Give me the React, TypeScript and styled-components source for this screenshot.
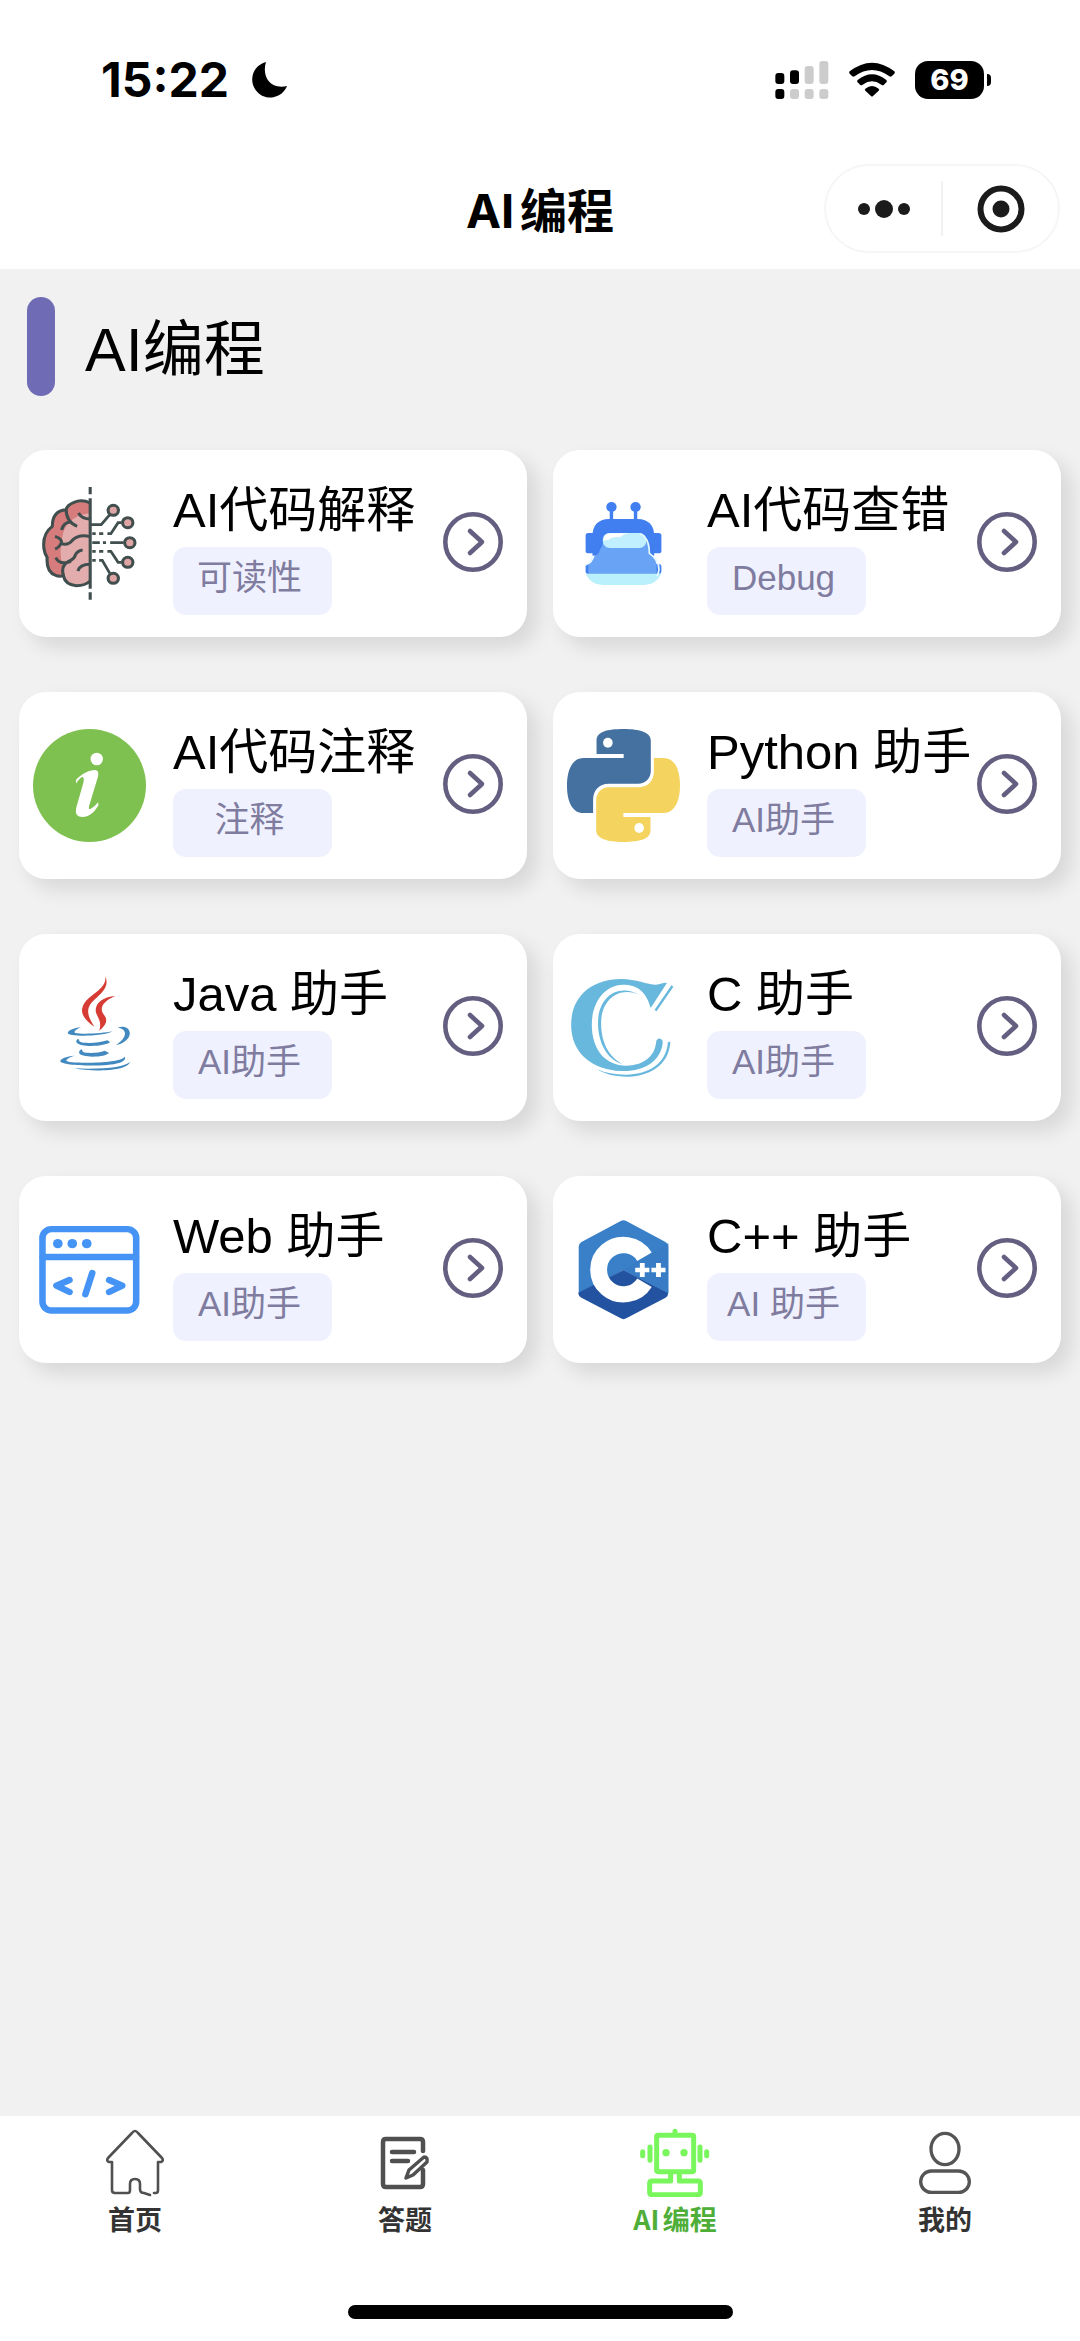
import React from 'react';
import styled, { createGlobalStyle } from 'styled-components';

const GlobalStyle = createGlobalStyle`
  * { box-sizing: border-box; }
  body {
    margin: 0;
    background: #f1f1f1;
    font-family: 'Liberation Sans', 'Noto Sans CJK SC', sans-serif;
    color: #000;
  }
`;

const Page = styled.div`
  display: flex;
  flex-direction: column;
  min-height: 100vh;
`;

const Header = styled.header`
  background: #fff;
  padding-bottom: 12px;
`;

const StatusBar = styled.div`
  display: flex;
  align-items: center;
  justify-content: space-between;
  height: 160px;
  padding: 0 89px 0 101px;
`;

const StatusGroup = styled.div<{ $gap: number }>`
  display: flex;
  align-items: center;
  gap: ${(p) => p.$gap}px;
`;

const Clock = styled.time`
  font: 700 48px/56px Inter, sans-serif;
`;

const Battery = styled.div`
  display: flex;
  align-items: center;
  gap: 3px;
`;

const BatteryLevel = styled.span`
  width: 69px;
  border-radius: 13px;
  background: #000;
  color: #fff;
  font: 800 29px/38px Inter, sans-serif;
  text-align: center;
`;

const BatteryTip = styled.span`
  width: 4px;
  height: 12px;
  border-radius: 0 6px 6px 0;
  background: #000;
`;

const NavBar = styled.div`
  display: grid;
  grid-template-columns: 1fr auto 1fr;
  align-items: center;
  height: 97px;
  padding: 0 20px;
`;

const NavTitle = styled.div`
  grid-column: 2;
  padding-top: 4px;
  font: 700 47px/60px Inter, 'Noto Sans CJK SC', sans-serif;
  text-autospace: normal;
`;

const Capsule = styled.div`
  justify-self: end;
  display: flex;
  align-items: center;
  width: 236px;
  height: 89px;
  border: 2px solid #f6f6f6;
  border-radius: 45px;
`;

const CapsuleButton = styled.button`
  flex: 1;
  display: flex;
  align-items: center;
  justify-content: center;
  height: 55px;
  padding: 0;
  border: 0;
  background: none;

  & + & {
    border-left: 2px solid #f1f1f1;
  }
`;

const Main = styled.main`
  flex: 1;
  padding: 28px 19px;
`;

const Heading = styled.div`
  display: flex;
  align-items: center;
  gap: 30px;
  margin: 0 8px 54px;
`;

const HeadingMark = styled.span`
  width: 28px;
  height: 99px;
  border-radius: 14px;
  background: #6f6cb5;
`;

const HeadingText = styled.h1`
  margin: 0;
  padding-top: 6px;
  font-size: 61px;
  font-weight: 400;
  line-height: 90px;
`;

const CardGrid = styled.div`
  display: grid;
  grid-template-columns: 1fr 1fr;
  gap: 55px 26px;
`;

const Card = styled.a`
  display: flex;
  align-items: center;
  min-width: 0;
  height: 187px;
  padding: 0 24px 0 14px;
  border-radius: 27px;
  background: #fff;
  box-shadow: 10px 10px 20px rgba(0, 0, 0, 0.11);
  color: #000;
  text-decoration: none;
`;

const CardBody = styled.div`
  flex: 1;
  min-width: 0;
  margin-left: 27px;
`;

const CardTitle = styled.div`
  font-size: 49px;
  line-height: 74px;
  white-space: nowrap;
`;

const Tag = styled.div`
  width: 159px;
  height: 68px;
  padding-right: 6px;
  border-radius: 13px;
  background: #f0f1fe;
  color: #7f7c9f;
  font-size: 35px;
  line-height: 62px;
  text-align: center;
`;

const Arrow = styled.svg`
  flex: none;
  margin-bottom: 4px;
`;

const TabBar = styled.nav`
  display: grid;
  grid-template-columns: repeat(4, 1fr);
  background: #fff;
  padding-top: 11px;
`;

const Tab = styled.a<{ $active?: boolean }>`
  display: flex;
  flex-direction: column;
  align-items: center;
  gap: 3px;
  color: ${(p) => (p.$active ? '#4fae38' : '#333')};
  font: 700 27px/38px 'Noto Sans CJK SC', sans-serif;
  text-autospace: normal;
  text-decoration: none;
`;

const HomeIndicator = styled.div`
  background: #fff;
  padding: 67px 0 22px;

  &::after {
    content: '';
    display: block;
    width: 385px;
    height: 14px;
    margin: 0 auto;
    border-radius: 7px;
    background: #000;
  }
`;

const Moon = () => (
  <svg width="38" height="38" viewBox="0 0 38 38">
    <path d="M15 1C11 13 17 29 36 25A18 18 0 1 1 15 1Z" />
  </svg>
);

const Signal = () => (
  <svg width="54" height="38" viewBox="75 63 160 114">
    <rect x="75" y="99" width="27" height="33" rx="9" />
    <rect x="119" y="91" width="27" height="41" rx="9" />
    <rect x="75" y="147" width="27" height="30" rx="9" />
    <g fill="#ccc">
      <rect x="163" y="78" width="27" height="54" rx="9" />
      <rect x="207" y="63" width="27" height="69" rx="9" />
      <rect x="119" y="147" width="27" height="30" rx="9" />
      <rect x="163" y="147" width="27" height="30" rx="9" />
      <rect x="207" y="147" width="27" height="30" rx="9" />
    </g>
  </svg>
);

const Wifi = () => (
  <svg width="46" height="36" viewBox="296 67 138 108">
    <path d="M298 95Q365 43 432 95Q435 99 432 102L424 110Q421 112 417 110Q365 72 313 110Q309 112 306 110L298 102Q295 99 298 95Z" />
    <path d="M322 121Q365 87 408 121Q412 125 408 128L401 135Q397 138 393 135Q365 115 337 135Q333 138 329 135L322 128Q318 125 322 121Z" />
    <path d="M345 147Q365 131 385 147Q388 150 385 153L368 169Q365 172 362 169L345 153Q342 150 345 147Z" />
  </svg>
);

const MoreDots = () => (
  <svg width="52" height="20" viewBox="0 0 52 20" fill="#1b1b1b">
    <circle cx="6" cy="10" r="6" />
    <circle cx="26" cy="10" r="9" />
    <circle cx="46" cy="10" r="6" />
  </svg>
);

const Target = () => (
  <svg width="48" height="48" viewBox="0 0 48 48">
    <circle cx="24" cy="24" r="20.5" fill="none" stroke="#1b1b1b" strokeWidth="6" />
    <circle cx="24" cy="24" r="8.5" fill="#1b1b1b" />
  </svg>
);

const ChevronCircle = () => (
  <Arrow width="60" height="60" viewBox="0 0 60 60" fill="none" stroke="#645f80" strokeWidth="4.6" strokeLinecap="round" strokeLinejoin="round">
    <circle cx="30" cy="30" r="27.7" />
    <path d="M27 19L39 30L27 41" />
  </Arrow>
);

const CardIcon = styled.svg.attrs({ width: 113, height: 113, preserveAspectRatio: 'none' })`
  flex: none;
`;

const BrainIcon = () => (
  <CardIcon viewBox="96 144 328 339">
    <path d="M262 192Q238 178 215 190Q195 198 192 212Q152 215 152 262Q122 285 128 330Q130 345 137 355Q134 400 162 409Q172 414 184 410Q190 438 222 440Q248 440 262 426Z" fill="#d77c7c" />
    <path d="M262 222C225 228 190 245 182 290C172 330 176 365 186 400Q190 438 222 440Q248 440 262 426Z" fill="#e3adad" />
    <g fill="none" stroke="#414e4e" strokeWidth="9">
      <path d="M262 192Q238 180 215 190Q195 198 192 212Q152 215 152 262Q122 285 128 330Q130 345 137 355Q134 400 162 409Q172 414 184 410Q190 438 222 440Q248 440 262 426" />
      <path d="M228 222Q238 240 262 240M192 210Q192 248 224 262M179 273Q184 250 206 248M160 292Q182 300 178 312Q172 326 160 330M178 314Q198 320 210 304Q230 284 262 293M162 356Q174 380 206 367M184 410Q176 380 198 368Q216 360 218 350Q224 335 240 333M226 396Q232 376 262 376" />
      <path d="M262 144V166M262 178V449M262 460V482" />
      <path d="M262 257H294L319 227M268 284H278M288 284H300M312 284H322L343 251H353M268 311H290M299 311H308M320 311H359M268 337H278M288 337H300M312 337H322L343 370H353M268 364H278M288 364H297L319 403" strokeWidth="8" />
      <g fill="#dfa5a5" strokeWidth="9">
        <circle cx="329" cy="214" r="15" />
        <circle cx="371" cy="251" r="15" />
        <circle cx="377" cy="311" r="15" />
        <circle cx="371" cy="370" r="15" />
        <circle cx="329" cy="418" r="15" />
      </g>
    </g>
  </CardIcon>
);

const RobotIcon = () => (
  <CardIcon viewBox="78 144 328 339">
    <g fill="#417ff0">
      <circle cx="207" cy="204" r="15" />
      <circle cx="277" cy="204" r="15" />
      <path d="M202 210H212V245H202ZM272 210H282V245H272Z" />
      <path d="M152 350V290C152 260 168 240 200 240H283C315 240 331 260 331 290V350Z" />
      <rect x="132" y="282" width="28" height="61" rx="8" />
      <rect x="323" y="282" width="29" height="61" rx="8" />
      <rect x="132" y="375" width="220" height="30" rx="8" />
    </g>
    <path d="M140 405V376Q150 374 158 352Q172 346 174 330Q182 322 184 304H312Q318 325 318 343Q332 350 338 376V405Z" fill="#68a3f6" />
    <path d="M182 327V300Q182 282 204 282H285Q312 285 312 327Z" fill="#68a3f6" />
    <rect x="182" y="282" width="126" height="45" rx="20" fill="#c0f0ff" />
    <path d="M184 306Q182 284 204 283H262Q242 284 232 295Q210 292 198 303Q188 302 184 306Z" fill="#fff" />
    <path d="M132 404H352Q335 438 302 438H182Q148 438 132 404Z" fill="#b9f0fb" />
    <path d="M290 284Q317 295 317 343Q345 362 345 392Q344 404 338 412M132 378Q150 370 153 350" fill="none" stroke="#e4f8ff" strokeWidth="5" />
  </CardIcon>
);

const InfoIcon = () => (
  <CardIcon viewBox="96 150 328 339">
    <ellipse cx="260" cy="319.500" rx="164" ry="169.500" fill="#7ec150" />
    <g fill="#fff">
      <ellipse cx="281" cy="240" rx="18" ry="19" />
      <path d="M221 302C238 284 258 274 276 273Q288 273 285 292L259 380Q256 394 264 389Q276 382 285 370L286 379C272 403 258 414 240 414Q216 414 221 388L242 312Q246 293 239 294Q231 297 221 314Z" />
    </g>
  </CardIcon>
);

const pythonHalf =
  'M243 150C195 150 164 158 164 185V225H243V237H125C95 237 78 270 78 320C78 370 95 402 125 402H154V363C154 335 170 314 200 314H285C307 314 322 297 322 275V185C322 160 290 150 243 150Z';

const PythonIcon = () => (
  <CardIcon viewBox="78 150 329 339">
    <path d={pythonHalf} fill="#4571a1" />
    <path d={pythonHalf} fill="#f4d35e" transform="rotate(180 242.500 319.500)" />
    <ellipse cx="197" cy="191" rx="14" ry="15" fill="#fff" />
    <ellipse cx="288" cy="447" rx="14" ry="15" fill="#fff" />
  </CardIcon>
);

const JavaIcon = () => (
  <CardIcon viewBox="96 154 328 339">
    <g fill="#d73c34">
      <path d="M306 170C320 205 290 224 267 248C248 270 256 292 274 321C244 300 226 276 248 246C272 218 310 205 306 170Z" />
      <path d="M335 229C298 232 277 250 278 274C280 292 298 302 288 333C310 316 314 300 302 285C288 268 296 246 335 229Z" />
    </g>
    <g fill="#4189be">
      <path d="M236 323C214 325 196 332 197 341C200 352 302 351 327 335C300 341 242 345 218 340C213 335 224 327 236 323Z" />
      <path d="M342 324C360 317 377 325 377 342C376 358 356 373 337 376C352 366 363 355 363 341C362 329 352 325 342 324Z" />
      <path d="M226 358C215 368 224 378 265 379C292 379 310 374 320 368L312 362C290 370 248 372 234 367C227 364 233 360 226 358Z" />
      <path d="M236 389C222 400 230 410 268 411C295 411 308 407 317 400L304 393C288 400 254 402 242 397C237 395 241 391 236 389Z" />
      <path d="M217 408C192 410 175 417 175 425C180 440 310 442 345 430C360 425 368 416 361 411C358 424 290 430 240 429C205 429 190 426 193 421C197 415 207 411 217 408Z" />
      <path d="M216 446C270 458 372 454 377 427C362 442 300 450 216 446Z" />
    </g>
  </CardIcon>
);

const CIcon = () => (
  <CardIcon viewBox="78 154 328 339">
    <path d="M368 190L321 265C308 215 282 195 240 195C185 197 150 250 150 315C150 390 190 438 250 438C300 438 334 410 337 365C339 353 355 353 356 367C352 425 300 457 235 454C150 450 90 400 90 315C90 230 150 178 235 178C285 178 320 200 345 194Q360 188 368 190Z" fill="#68b8de" />
    <path d="M293 227C222 186 168 235 168 310C168 378 202 424 239 433C204 414 177 375 177 310C177 243 226 196 293 227Z" fill="#68b8de" />
    <path d="M371 367L378 366C374 440 312 471 250 471C215 471 186 463 166 449C190 460 215 465 250 465C310 464 366 436 371 367Z" fill="#68b8de" />
    <path d="M384 199L335 273" stroke="#68b8de" strokeWidth="7" />
  </CardIcon>
);

const WebIcon = () => (
  <CardIcon viewBox="96 159 328 339">
    <g fill="none" stroke="#4594f5" strokeWidth="19" strokeLinecap="round" strokeLinejoin="round">
      <rect x="123.500" y="207.500" width="272" height="244" rx="26" />
      <path d="M124 291H395M202 360L164 377L202 396M268 339L248 403M317 360L355 377L317 396" />
    </g>
    <g fill="#4594f5">
      <circle cx="168" cy="251" r="14" />
      <circle cx="210" cy="251" r="14" />
      <circle cx="252" cy="251" r="14" />
    </g>
  </CardIcon>
);

const CppIcon = () => (
  <CardIcon viewBox="78 159 328 339">
    <path d="M234 183Q242 178 250 183L364 246Q372 251 372 260V398L242 330L112 402V260Q112 251 120 246Z" fill="#3a80c8" />
    <path d="M111 398L242 330L372 398Q372 408 364 413L250 475Q242 480 234 475L120 413Q111 408 111 398Z" fill="#2252a0" />
    <path d="M242 330L372 250V400Z" fill="#377cc4" />
    <path d="M303 290A72 74 0 1 0 303 368" fill="none" stroke="#fff" strokeWidth="49" />
    <path d="M276 330H317M296.500 309V351M323 330H364M343.500 309V351" stroke="#fff" strokeWidth="14" />
  </CardIcon>
);

const HomeIcon = () => (
  <svg width="70" height="70" viewBox="0 0 70 70" fill="none" stroke="#505050" strokeWidth="2.600" strokeLinejoin="round" strokeLinecap="round">
    <path d="M54 66H56Q58 66 58 63V35H61Q64 34 62 31L38 6Q35 2 32 6L8 31Q6 34 9 35H12V63Q12 66 15 66H28Q30 66 30 63V57Q30 52 35 52Q40 52 40 57V62Q40 66 44 66L50 68" />
  </svg>
);

const QuizIcon = () => (
  <svg width="70" height="70" viewBox="0 0 70 70" fill="none" stroke="#505050" strokeWidth="4.500" strokeLinejoin="round" strokeLinecap="round">
    <path d="M53 24V15Q53 12 50 12H16Q13 12 13 15V57Q13 60 16 60H50Q53 60 53 57V43" />
    <path d="M22 25H44M22 34H38" />
    <path d="M54 30Q58 30 57 35L43 48L36 51L39 43Z" strokeWidth="3.500" />
  </svg>
);

const TabRobotIcon = () => (
  <svg width="70" height="70" viewBox="60 51 210 210" fill="none" stroke="#79f65c" strokeWidth="15" strokeLinecap="round" strokeLinejoin="round">
    <rect x="110" y="76" width="111" height="109" rx="4" />
    <path d="M165 64V74M90 111V151M240 111V151M68 125V137M260 125V137M152 190V213H96Q89 213 89 220V247Q89 254 96 254H234Q241 254 241 247V220Q241 213 234 213H178V190" />
    <circle cx="138" cy="128" r="11" fill="#79f65c" stroke="none" />
    <circle cx="192" cy="128" r="11" fill="#79f65c" stroke="none" />
  </svg>
);

const UserIcon = () => (
  <svg width="70" height="70" viewBox="870 51 210 210" fill="none" stroke="#555" strokeWidth="10">
    <ellipse cx="975" cy="117" rx="42" ry="47" />
    <rect x="902" y="183" width="146" height="64" rx="32" />
  </svg>
);

const tools = [
  { title: 'AI代码解释', tag: '可读性', Icon: BrainIcon },
  { title: 'AI代码查错', tag: 'Debug', Icon: RobotIcon },
  { title: 'AI代码注释', tag: '注释', Icon: InfoIcon },
  { title: 'Python 助手', tag: 'AI助手', Icon: PythonIcon },
  { title: 'Java 助手', tag: 'AI助手', Icon: JavaIcon },
  { title: 'C 助手', tag: 'AI助手', Icon: CIcon },
  { title: 'Web 助手', tag: 'AI助手', Icon: WebIcon },
  { title: 'C++ 助手', tag: 'AI 助手', Icon: CppIcon },
];

const tabs = [
  { label: '首页', Icon: HomeIcon },
  { label: '答题', Icon: QuizIcon },
  { label: 'AI编程', Icon: TabRobotIcon, active: true },
  { label: '我的', Icon: UserIcon },
];

export default function App() {
  return (
    <Page>
      <GlobalStyle />
      <Header>
        <StatusBar>
          <StatusGroup $gap={22}>
            <Clock>15:22</Clock>
            <Moon />
          </StatusGroup>
          <StatusGroup $gap={20}>
            <Signal />
            <Wifi />
            <Battery>
              <BatteryLevel>69</BatteryLevel>
              <BatteryTip />
            </Battery>
          </StatusGroup>
        </StatusBar>
        <NavBar>
          <NavTitle>AI编程</NavTitle>
          <Capsule>
            <CapsuleButton type="button" aria-label="更多">
              <MoreDots />
            </CapsuleButton>
            <CapsuleButton type="button" aria-label="关闭">
              <Target />
            </CapsuleButton>
          </Capsule>
        </NavBar>
      </Header>
      <Main>
        <Heading>
          <HeadingMark />
          <HeadingText>AI编程</HeadingText>
        </Heading>
        <CardGrid>
          {tools.map(({ title, tag, Icon }) => (
            <Card href="#" key={title}>
              <Icon />
              <CardBody>
                <CardTitle>{title}</CardTitle>
                <Tag>{tag}</Tag>
              </CardBody>
              <ChevronCircle />
            </Card>
          ))}
        </CardGrid>
      </Main>
      <TabBar>
        {tabs.map(({ label, Icon, active }) => (
          <Tab href="#" key={label} $active={active}>
            <Icon />
            {label}
          </Tab>
        ))}
      </TabBar>
      <HomeIndicator />
    </Page>
  );
}
